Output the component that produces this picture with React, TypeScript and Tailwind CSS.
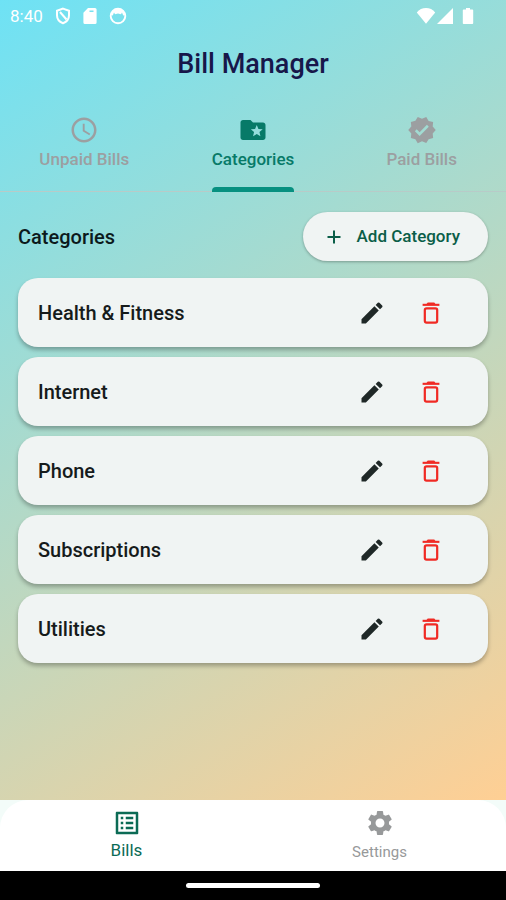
import React, { useState } from 'react';
import {
  MdEdit,
  MdFolderSpecial,
  MdOutlineListAlt,
  MdSchedule,
  MdSettings,
  MdVerified,
} from 'react-icons/md';

const TABS = [
  { id: 'unpaid', label: 'Unpaid Bills', icon: MdSchedule },
  { id: 'categories', label: 'Categories', icon: MdFolderSpecial },
  { id: 'paid', label: 'Paid Bills', icon: MdVerified },
];

const CATEGORIES = ['Health & Fitness', 'Internet', 'Phone', 'Subscriptions', 'Utilities'];

const TrashIcon = () => (
  <svg viewBox="0 0 24 24" className="size-7" fill="none" stroke="currentColor" aria-hidden="true">
    <path d="M4.800 5h14.400" strokeWidth="1.8" />
    <path d="M8 4.600 9.200 3h5.600L16 4.600z" fill="currentColor" stroke="none" />
    <rect x="6.700" y="8" width="10.600" height="12.200" rx="1.500" strokeWidth="1.9" />
  </svg>
);

const StatusBar = () => (
  <div className="flex h-8 items-center justify-between pl-[10px] pr-[32px] text-white">
    <div className="flex items-center">
      <span className="text-[17px] leading-8">8:40</span>
      <svg viewBox="0 0 16 18" className="ml-3 h-[18px] w-4" fill="none" stroke="currentColor" strokeWidth="2" aria-hidden="true">
        <path d="M8 1.6 14 3.800v4.400c0 3.700-2.400 6.600-6 8-3.600-1.400-6-4.300-6-8V3.800z" />
        <path d="M5 5l6.500 7.500" />
      </svg>
      <svg viewBox="0 0 14 18" className="ml-3 h-[18px] w-[14px]" fill="currentColor" aria-hidden="true">
        <path
          fillRule="evenodd"
          d="M5 1h7a1.600 1.600 0 0 1 1.600 1.600v12.800A1.600 1.600 0 0 1 12 17H2a1.600 1.600 0 0 1-1.600-1.600V5.800zM6.500 3.400v1.600h4V3.400z"
        />
      </svg>
      <svg viewBox="0 0 18 18" className="ml-3 size-[18px]" aria-hidden="true">
        <circle cx="9" cy="9" r="7.300" fill="none" stroke="currentColor" strokeWidth="1.9" />
        <path d="M1.800 8C2.600 4 5.600 1.800 9 1.800S15.400 4 16.200 8l-2 .6-1.200-3-1 1.600L9 6.400l-3 .8-1-1.600-1.200 3z" fill="currentColor" />
      </svg>
    </div>
    <div className="flex items-center">
      <svg viewBox="0 0 20 18" className="h-[18px] w-5" fill="currentColor" aria-hidden="true">
        <path d="M10 16.800.8 5.400C3.200 2.400 6.400 1 10 1s6.800 1.400 9.200 4.400z" />
      </svg>
      <svg viewBox="0 0 18 18" className="size-[18px]" fill="currentColor" aria-hidden="true">
        <path d="M17 1v16H1z" />
      </svg>
      <svg viewBox="0 0 12 18" className="ml-2 h-[18px] w-3" fill="currentColor" aria-hidden="true">
        <path d="M4 1h4v1.500h2.400c.4 0 .8.300.8.800v12.900c0 .5-.4.800-.8.800H1.600c-.4 0-.8-.3-.8-.8V3.300c0-.5.4-.8.8-.8H4z" />
      </svg>
    </div>
  </div>
);

const CategoryCard = ({ name }: { name: string }) => (
  <li className="flex h-[69px] items-center rounded-[20px] bg-[#f0f4f3] pl-5 pr-7 shadow-[0_3px_4px_rgba(0,0,0,0.28)]">
    <span className="flex-1 text-xl font-medium text-[#161b1b]">{name}</span>
    <button type="button" aria-label={`Edit ${name}`} className="flex size-[59px] items-center justify-center text-[#1f2827]">
      <MdEdit className="size-7" />
    </button>
    <button type="button" aria-label={`Delete ${name}`} className="flex size-[59px] items-center justify-center text-[#f02a24]">
      <TrashIcon />
    </button>
  </li>
);

function App() {
  const [tab, setTab] = useState('categories');

  return (
    <div className="flex min-h-screen flex-col bg-black font-[Roboto,sans-serif]">
      <div className="flex flex-1 flex-col bg-[linear-gradient(148deg,#6ee2f5,#ffcf94)]">
        <StatusBar />
        <h1 className="py-4 text-center text-[27px] font-medium leading-8 text-[#17174a]">Bill Manager</h1>

        {/* Tabs */}
        <nav className="grid h-24 grid-cols-3 border-b border-[#b8cbc8]">
          {TABS.map(({ id, label, icon: Icon }) => (
            <button
              key={id}
              type="button"
              onClick={() => setTab(id)}
              className={`flex justify-center ${tab === id ? 'text-[#077a68]' : 'text-[#9c9fa1]'}`}
            >
              <span className="flex h-24 flex-col items-center pt-[19px]">
                <Icon className="size-[30px]" />
                <span className="mt-[2px] text-[17px] font-medium leading-6">{label}</span>
                {tab === id && <span className="mt-auto h-[5px] w-full rounded-t-[4px] bg-[#079080]" />}
              </span>
            </button>
          ))}
        </nav>

        <main className="flex-1 px-[18px] pb-6 pt-5">
          <div className="flex items-center justify-between">
            <h2 className="text-xl font-medium text-[#0c1a1c]">Categories</h2>
            <button
              type="button"
              className="flex h-[49px] items-center gap-3 rounded-full bg-[#f0f4f3] pl-5 pr-7 text-[17px] font-medium text-[#0b5e48] shadow-[0_1px_3px_rgba(0,0,0,0.3)]"
            >
              <svg viewBox="0 0 22 22" className="size-[22px]" fill="none" stroke="currentColor" strokeWidth="2" aria-hidden="true">
                <path d="M11 4.500v13M4.500 11h13" />
              </svg>
              Add Category
            </button>
          </div>
          <ul className="mt-[17px] flex flex-col gap-[10px]">
            {CATEGORIES.map((name) => (
              <CategoryCard key={name} name={name} />
            ))}
          </ul>
        </main>
      </div>

      {/* Bottom navigation */}
      <div className="bg-[#f3fcf9]">
        <nav className="grid h-[71px] grid-cols-2 rounded-t-[28px] bg-white">
          <button type="button" className="flex flex-col items-center pt-2 text-[#0b6b55]">
            <MdOutlineListAlt className="size-[30px]" />
            <span className="text-[17px] leading-6">Bills</span>
          </button>
          <button type="button" className="flex flex-col items-center pt-2 text-[#97999a]">
            <MdSettings className="size-[30px]" />
            <span className="mt-[2px] text-[15px] leading-6">Settings</span>
          </button>
        </nav>
      </div>

      <div className="flex h-[29px] items-center justify-center bg-black">
        <div className="h-[5px] w-[134px] rounded-full bg-white" />
      </div>
    </div>
  );
}

export default App;
